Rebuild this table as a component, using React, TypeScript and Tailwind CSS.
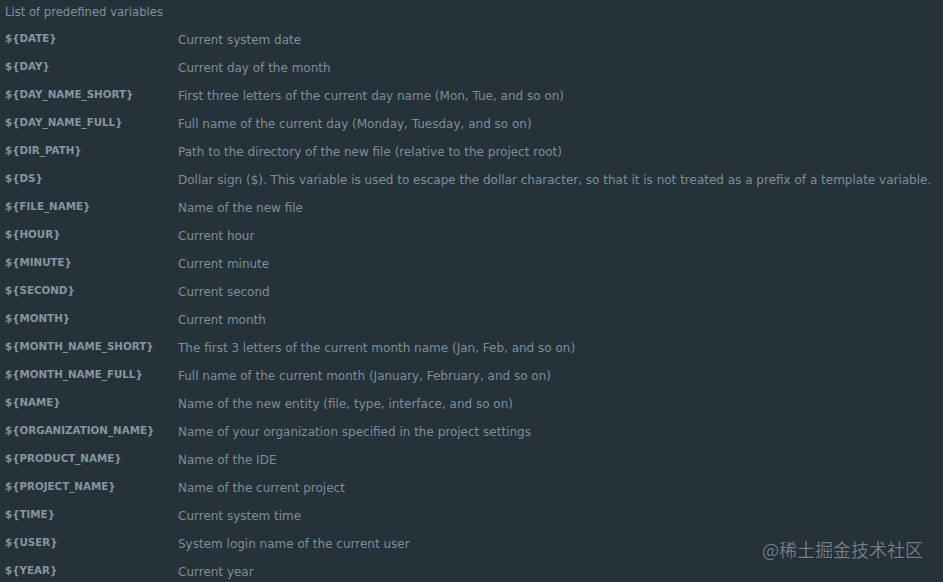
// Predefined file-template variables, shown as a two-column reference table
// on a dark editor background, with a site watermark in the corner.

const variables: [string, string][] = [
  ["${DATE}", "Current system date"],
  ["${DAY}", "Current day of the month"],
  ["${DAY_NAME_SHORT}", "First three letters of the current day name (Mon, Tue, and so on)"],
  ["${DAY_NAME_FULL}", "Full name of the current day (Monday, Tuesday, and so on)"],
  ["${DIR_PATH}", "Path to the directory of the new file (relative to the project root)"],
  [
    "${DS}",
    "Dollar sign ($). This variable is used to escape the dollar character, so that it is not treated as a prefix of a template variable.",
  ],
  ["${FILE_NAME}", "Name of the new file"],
  ["${HOUR}", "Current hour"],
  ["${MINUTE}", "Current minute"],
  ["${SECOND}", "Current second"],
  ["${MONTH}", "Current month"],
  ["${MONTH_NAME_SHORT}", "The first 3 letters of the current month name (Jan, Feb, and so on)"],
  ["${MONTH_NAME_FULL}", "Full name of the current month (January, February, and so on)"],
  ["${NAME}", "Name of the new entity (file, type, interface, and so on)"],
  ["${ORGANIZATION_NAME}", "Name of your organization specified in the project settings"],
  ["${PRODUCT_NAME}", "Name of the IDE"],
  ["${PROJECT_NAME}", "Name of the current project"],
  ["${TIME}", "Current system time"],
  ["${USER}", "System login name of the current user"],
  ["${YEAR}", "Current year"],
];

export default function App() {
  return (
    <div className="relative h-[582px] w-[943px] overflow-hidden bg-[#263239] pl-[5px] font-['DejaVu_Sans',sans-serif]">
      <div className="flex h-[26px] items-center text-[11.6px] text-[#7f909b]">
        List of predefined variables
      </div>
      {variables.map(([name, desc]) => (
        <div key={name} className="flex h-[28px] items-center whitespace-nowrap">
          <span className="mb-[3px] w-[173px] shrink-0 text-[10.3px] font-bold text-[#8595a1]">
            {name}
          </span>
          <span className="text-[12px] text-[#7d8e99]">{desc}</span>
        </div>
      ))}
      {/* watermark overlay */}
      <div className="absolute right-[20px] top-[540px] text-[18px] leading-none text-[#717c86] [text-shadow:0_0_1px_rgba(0,0,0,0.4)] font-['Noto_Sans_CJK_SC',sans-serif]">
        @稀土掘金技术社区
      </div>
    </div>
  );
}
